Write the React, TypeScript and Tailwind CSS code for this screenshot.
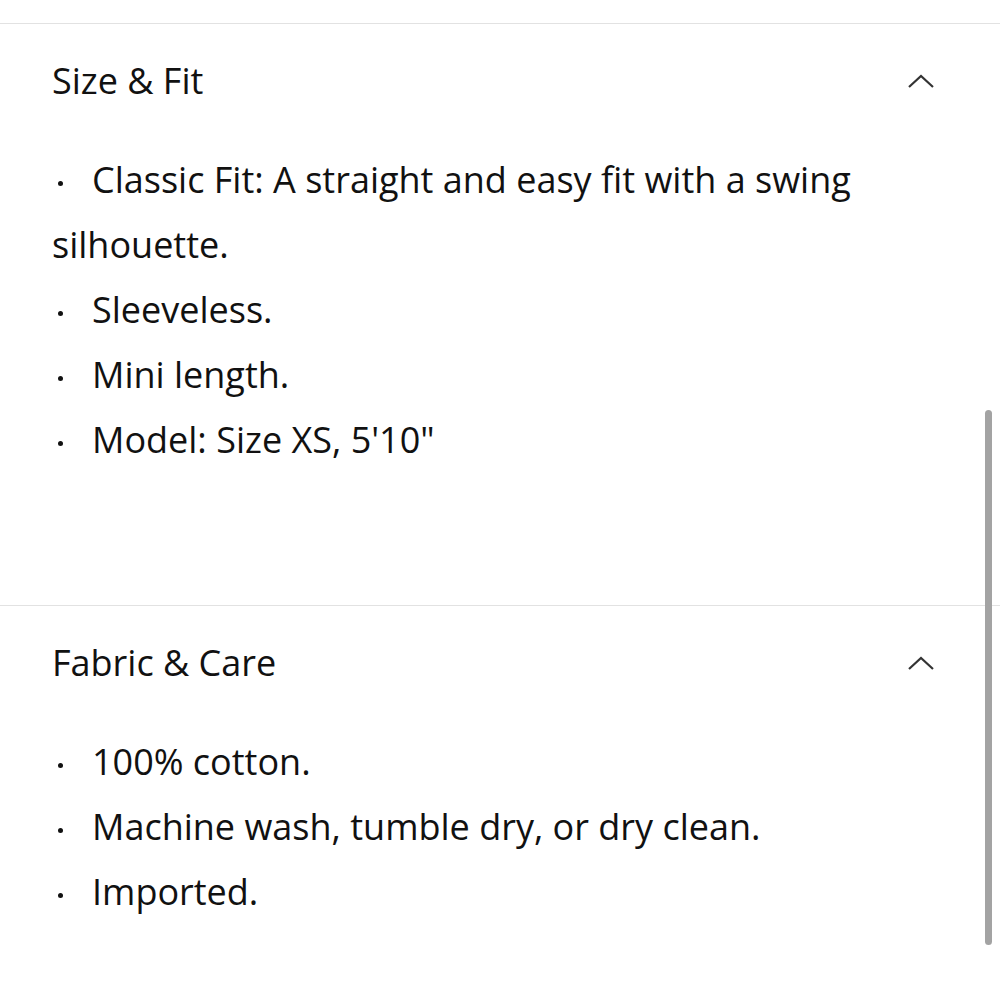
import React from "react";

const Chevron = () => (
  <svg width="30" height="18" viewBox="0 0 30 18" fill="none" className="text-[#333]">
    <path d="M3 15 L15 4 L27 15" stroke="currentColor" strokeWidth="2.2" />
  </svg>
);

const Bullet = ({ children }: { children: React.ReactNode }) => (
  <p className="leading-[65px]">
    <span className="inline-block w-[5px] h-[5px] rounded-full bg-[#111] ml-[6px] mr-[29px] align-middle" />
    {children}
  </p>
);

const Section = ({ title, items }: { title: string; items: string[] }) => (
  <section className="border-t border-[#e2e2e2]">
    <div className="flex items-center justify-between pl-[52px] pr-[64px] pt-[34px] pb-[43px]">
      <h2 className="text-[36px] leading-[46px] text-[#111]">{title}</h2>
      <Chevron />
    </div>
    <div className="pl-[52px] pr-[52px] text-[36px] text-[#111]">
      {items.map((t) => (
        <Bullet key={t}>{t}</Bullet>
      ))}
    </div>
  </section>
);

export default function App() {
  return (
    <div className="relative w-[1000px] h-[1000px] bg-white overflow-hidden" style={{ fontFamily: "'Open Sans', 'Noto Sans', sans-serif" }}>
      <div className="h-[23px]" />
      <div className="h-[582px]">
        <Section
          title="Size & Fit"
          items={[
            "Classic Fit: A straight and easy fit with a swing silhouette.",
            "Sleeveless.",
            "Mini length.",
            "Model: Size XS, 5'10\"",
          ]}
        />
      </div>
      <Section
        title="Fabric & Care"
        items={["100% cotton.", "Machine wash, tumble dry, or dry clean.", "Imported."]}
      />
      <div className="absolute right-[8px] top-[410px] h-[535px] w-[7px] rounded-full bg-[#a3a3a3]" />
    </div>
  );
}
